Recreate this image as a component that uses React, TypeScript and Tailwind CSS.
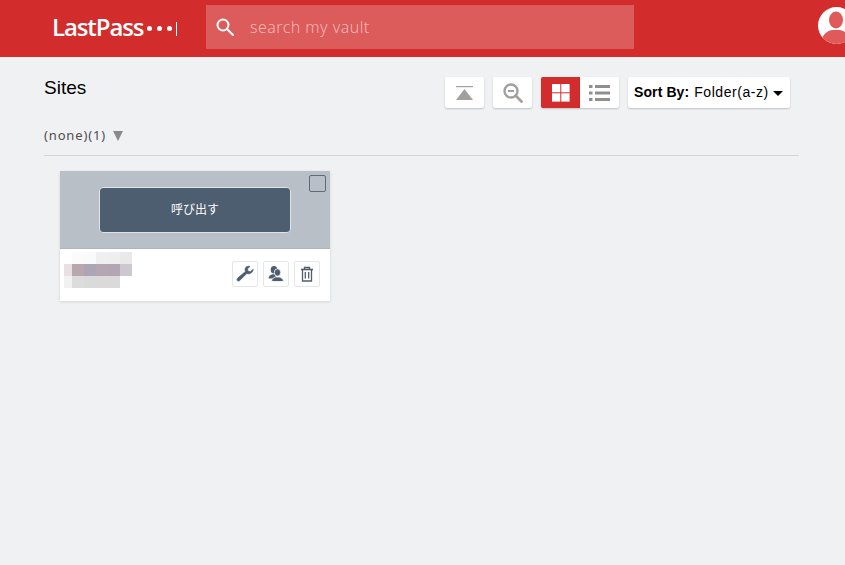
const blurRows = [
  ['#ffffff', '#fbfbfb', '#fafafa', '#efefef', '#eeeeee', '#e9e9ea'],
  ['#e8e0e2', '#b8a8ae', '#aca5b6', '#b6a6b2', '#b4a5b4', '#cdc7cf'],
  ['#f1f1f1', '#dcdcdc', '#dadada', '#dadada', '#dadada', '#ffffff'],
];

function Logo() {
  return (
    <div className="flex items-center shrink-0 w-[154px] ml-[52px] -mt-[3px] text-white">
      <span className="text-[24px] leading-none font-semibold tracking-[-1.1px] font-['Open_Sans',sans-serif]">LastPass</span>
      <span className="flex items-center gap-[5px] ml-[4px] mt-[3px]">
        <i className="w-[5px] h-[5px] rounded-full bg-white" />
        <i className="w-[5px] h-[5px] rounded-full bg-white" />
        <i className="w-[5px] h-[5px] rounded-full bg-white" />
      </span>
      <i className="w-px h-[14px] bg-white ml-[4px] mt-[3px]" />
    </div>
  );
}

function ToolButton({ children, className }: { children: React.ReactNode; className?: string }) {
  return (
    <div className={`w-[39px] h-[31px] flex items-center justify-center bg-white shadow-[0_1px_2px_rgba(0,0,0,0.2)] ${className ?? ''}`}>
      {children}
    </div>
  );
}

function CardAction({ children }: { children: React.ReactNode }) {
  return (
    <div className="w-[26px] h-[26px] flex items-center justify-center bg-white border border-[#e4e6e9] rounded-[2px]">
      {children}
    </div>
  );
}

export default function App() {
  return (
    <div className="w-[845px] h-[565px] overflow-hidden bg-[#f0f1f3] font-['Noto_Sans','Noto_Sans_CJK_JP',sans-serif]">
      <header className="h-[57px] bg-[#d22d2c] flex items-center overflow-hidden">
        <Logo />
        <div className="w-[428px] h-[44px] shrink-0 -mt-[3px] bg-[#dc5b5b] flex items-center pl-[9px]">
          <svg width="20" height="20" viewBox="0 0 20 20" fill="none" stroke="#fff" strokeWidth="2">
            <circle cx="8" cy="8" r="5.5" />
            <path d="M12 12l6 6" strokeLinecap="round" />
          </svg>
          <span className="ml-[15px] text-[16px] tracking-[0.45px] font-light text-[#f2b6b6]">search my vault</span>
        </div>
        <div className="ml-[184px] w-[37px] h-[37px] shrink-0 -mt-[6px] rounded-full bg-white overflow-hidden">
          <svg width="37" height="37" viewBox="0 0 37 37" fill="#e05a5a">
            <ellipse cx="18" cy="13" rx="7" ry="8.500" />
            <path d="M3 37c0-9 6-13 11-14h8c5 1 11 5 11 14z" />
          </svg>
        </div>
      </header>

      <main className="pl-[44px] w-[799px]">
        <div className="h-[51px] pt-[20px] flex items-start justify-between pr-[9px]">
          <h1 className="text-[19px] leading-[20px] mt-px text-black font-normal font-['Liberation_Sans',sans-serif]">Sites</h1>
          <div className="flex">
            <ToolButton className="rounded-[2px]">
              <svg width="17" height="14" viewBox="0 0 17 14" fill="#a0a0a0">
                <rect x="0" y="0" width="17" height="1.200" />
                <path d="M8.500 3L17 14H0z" />
              </svg>
            </ToolButton>
            <ToolButton className="rounded-[2px] ml-[9px]">
              <svg width="20" height="20" viewBox="0 0 20 20" fill="none" stroke="#a0a0a0" strokeWidth="2.400">
                <circle cx="8" cy="8" r="6.500" />
                <path d="M5 8h6" strokeWidth="2" />
                <path d="M13 13l5.500 5.500" strokeWidth="2.800" strokeLinecap="round" />
              </svg>
            </ToolButton>
            <ToolButton className="!bg-[#d22d2c] rounded-l-[2px] ml-[9px]">
              <svg width="18" height="18" viewBox="0 0 18 18" fill="#fff">
                <rect width="8.300" height="8.300" />
                <rect x="9.300" width="8.300" height="8.300" />
                <rect y="9.300" width="8.300" height="8.300" />
                <rect x="9.300" y="9.300" width="8.300" height="8.300" />
              </svg>
            </ToolButton>
            <ToolButton className="rounded-r-[2px]">
              <svg width="21" height="16" viewBox="0 0 21 16" fill="#8f8f8f">
                <rect width="3.500" height="3" />
                <rect x="6" width="15" height="3" />
                <rect y="6.500" width="3.500" height="3" />
                <rect x="6" y="6.500" width="15" height="3" />
                <rect y="13" width="3.500" height="3" />
                <rect x="6" y="13" width="15" height="3" />
              </svg>
            </ToolButton>
            <div className="ml-[9px] w-[162px] h-[31px] flex items-center pl-[6px] bg-white rounded-[2px] shadow-[0_1px_2px_rgba(0,0,0,0.2)] text-[14px] text-black whitespace-nowrap font-['Liberation_Sans',sans-serif]">
              <span className="font-bold tracking-[0.1px]">Sort By:</span>
              <span className="ml-[5px] text-[14px] tracking-[0.55px]">Folder(a-z)</span>
              <i className="ml-[4px] mt-[2px] w-0 h-0 border-x-[5px] border-x-transparent border-t-[5px] border-t-black" />
            </div>
          </div>
        </div>

        <div className="h-[48px] flex items-start border-b border-[#d3d5d8] pt-[18px]">
          <span className="text-[13px] leading-[18px] tracking-[0.85px] text-[#4e4e4e]">(none)(1)</span>
          <svg className="ml-[7px] mt-[5px]" width="10" height="10" viewBox="0 0 10 10" fill="#8a8a8a">
            <path d="M0 0h10L5 10z" />
          </svg>
        </div>

        <section className="ml-[16px] mt-[15px] w-[270px] h-[130px] bg-white shadow-[0_1px_3px_rgba(0,0,0,0.12)]">
          <div className="relative h-[78px] bg-[#b8bfc7] flex items-center justify-center border-b border-[#aeb5bd]">
            <button className="w-[192px] h-[46px] bg-[#4d5e70] border border-[#dfe3e7] rounded-[4px] text-[12px] text-white">呼び出す</button>
            <span className="absolute top-[4px] right-[4px] w-[17px] h-[17px] border border-[#5c6b7a] rounded-[2px]" />
          </div>
          <div className="flex items-start justify-between pr-[10px]">
            <div className="mt-[3px] ml-[4px]">
              {blurRows.map((row, i) => (
                <div key={i} className="flex">
                  {row.map((c, j) => (
                    <div key={j} className={`h-[12px] ${j === 0 ? 'w-[8px]' : 'w-[12px]'}`} style={{ backgroundColor: c }} />
                  ))}
                </div>
              ))}
            </div>
            <div className="flex gap-[5px] mt-[12px]">
              <CardAction>
                <svg width="18" height="18" viewBox="0 0 18 18" fill="#4d5e70" stroke="#4d5e70" strokeWidth="0.700">
                  <path d="M17 4.500l-2.800 2.300-2.200-.7-.6-2.200L14 1.500C12 .7 9.800 1.500 9.200 3.600c-.3 1-.2 2 .3 2.800L2 12.800c-.9.800-1.300 1.800-.7 2.700.7.900 1.800.7 2.600-.2l7-6.900c1 .5 2 .6 3 .2 2.100-.8 3.400-2.400 3.100-4.600z" />
                </svg>
              </CardAction>
              <CardAction>
                <svg width="18" height="18" viewBox="0 0 18 18" fill="#4d5e70">
                  <ellipse cx="7" cy="4.800" rx="3.300" ry="3.800" />
                  <path d="M1.500 13.500c0-2.800 2.200-3.800 4-4.300h3l.5 4.300z" />
                  <ellipse cx="10.500" cy="7.500" rx="3.200" ry="3.700" stroke="#fff" strokeWidth="0.800" />
                  <path d="M4.500 16.500c0-2.800 2.400-4 4-4.500h4c1.600.5 4 1.700 4 4.500z" stroke="#fff" strokeWidth="0.800" />
                </svg>
              </CardAction>
              <CardAction>
                <svg width="14" height="16" viewBox="0 0 14 16" fill="none" stroke="#4d5e70" strokeWidth="1.300">
                  <path d="M1 3.500h12" strokeWidth="1.600" />
                  <path d="M4.500 3.500V1.500h5v2" />
                  <path d="M2.500 3.500v11.500h9V3.500" />
                  <path d="M5.300 6v6.500M8.700 6v6.500" />
                </svg>
              </CardAction>
            </div>
          </div>
        </section>
      </main>
    </div>
  );
}
